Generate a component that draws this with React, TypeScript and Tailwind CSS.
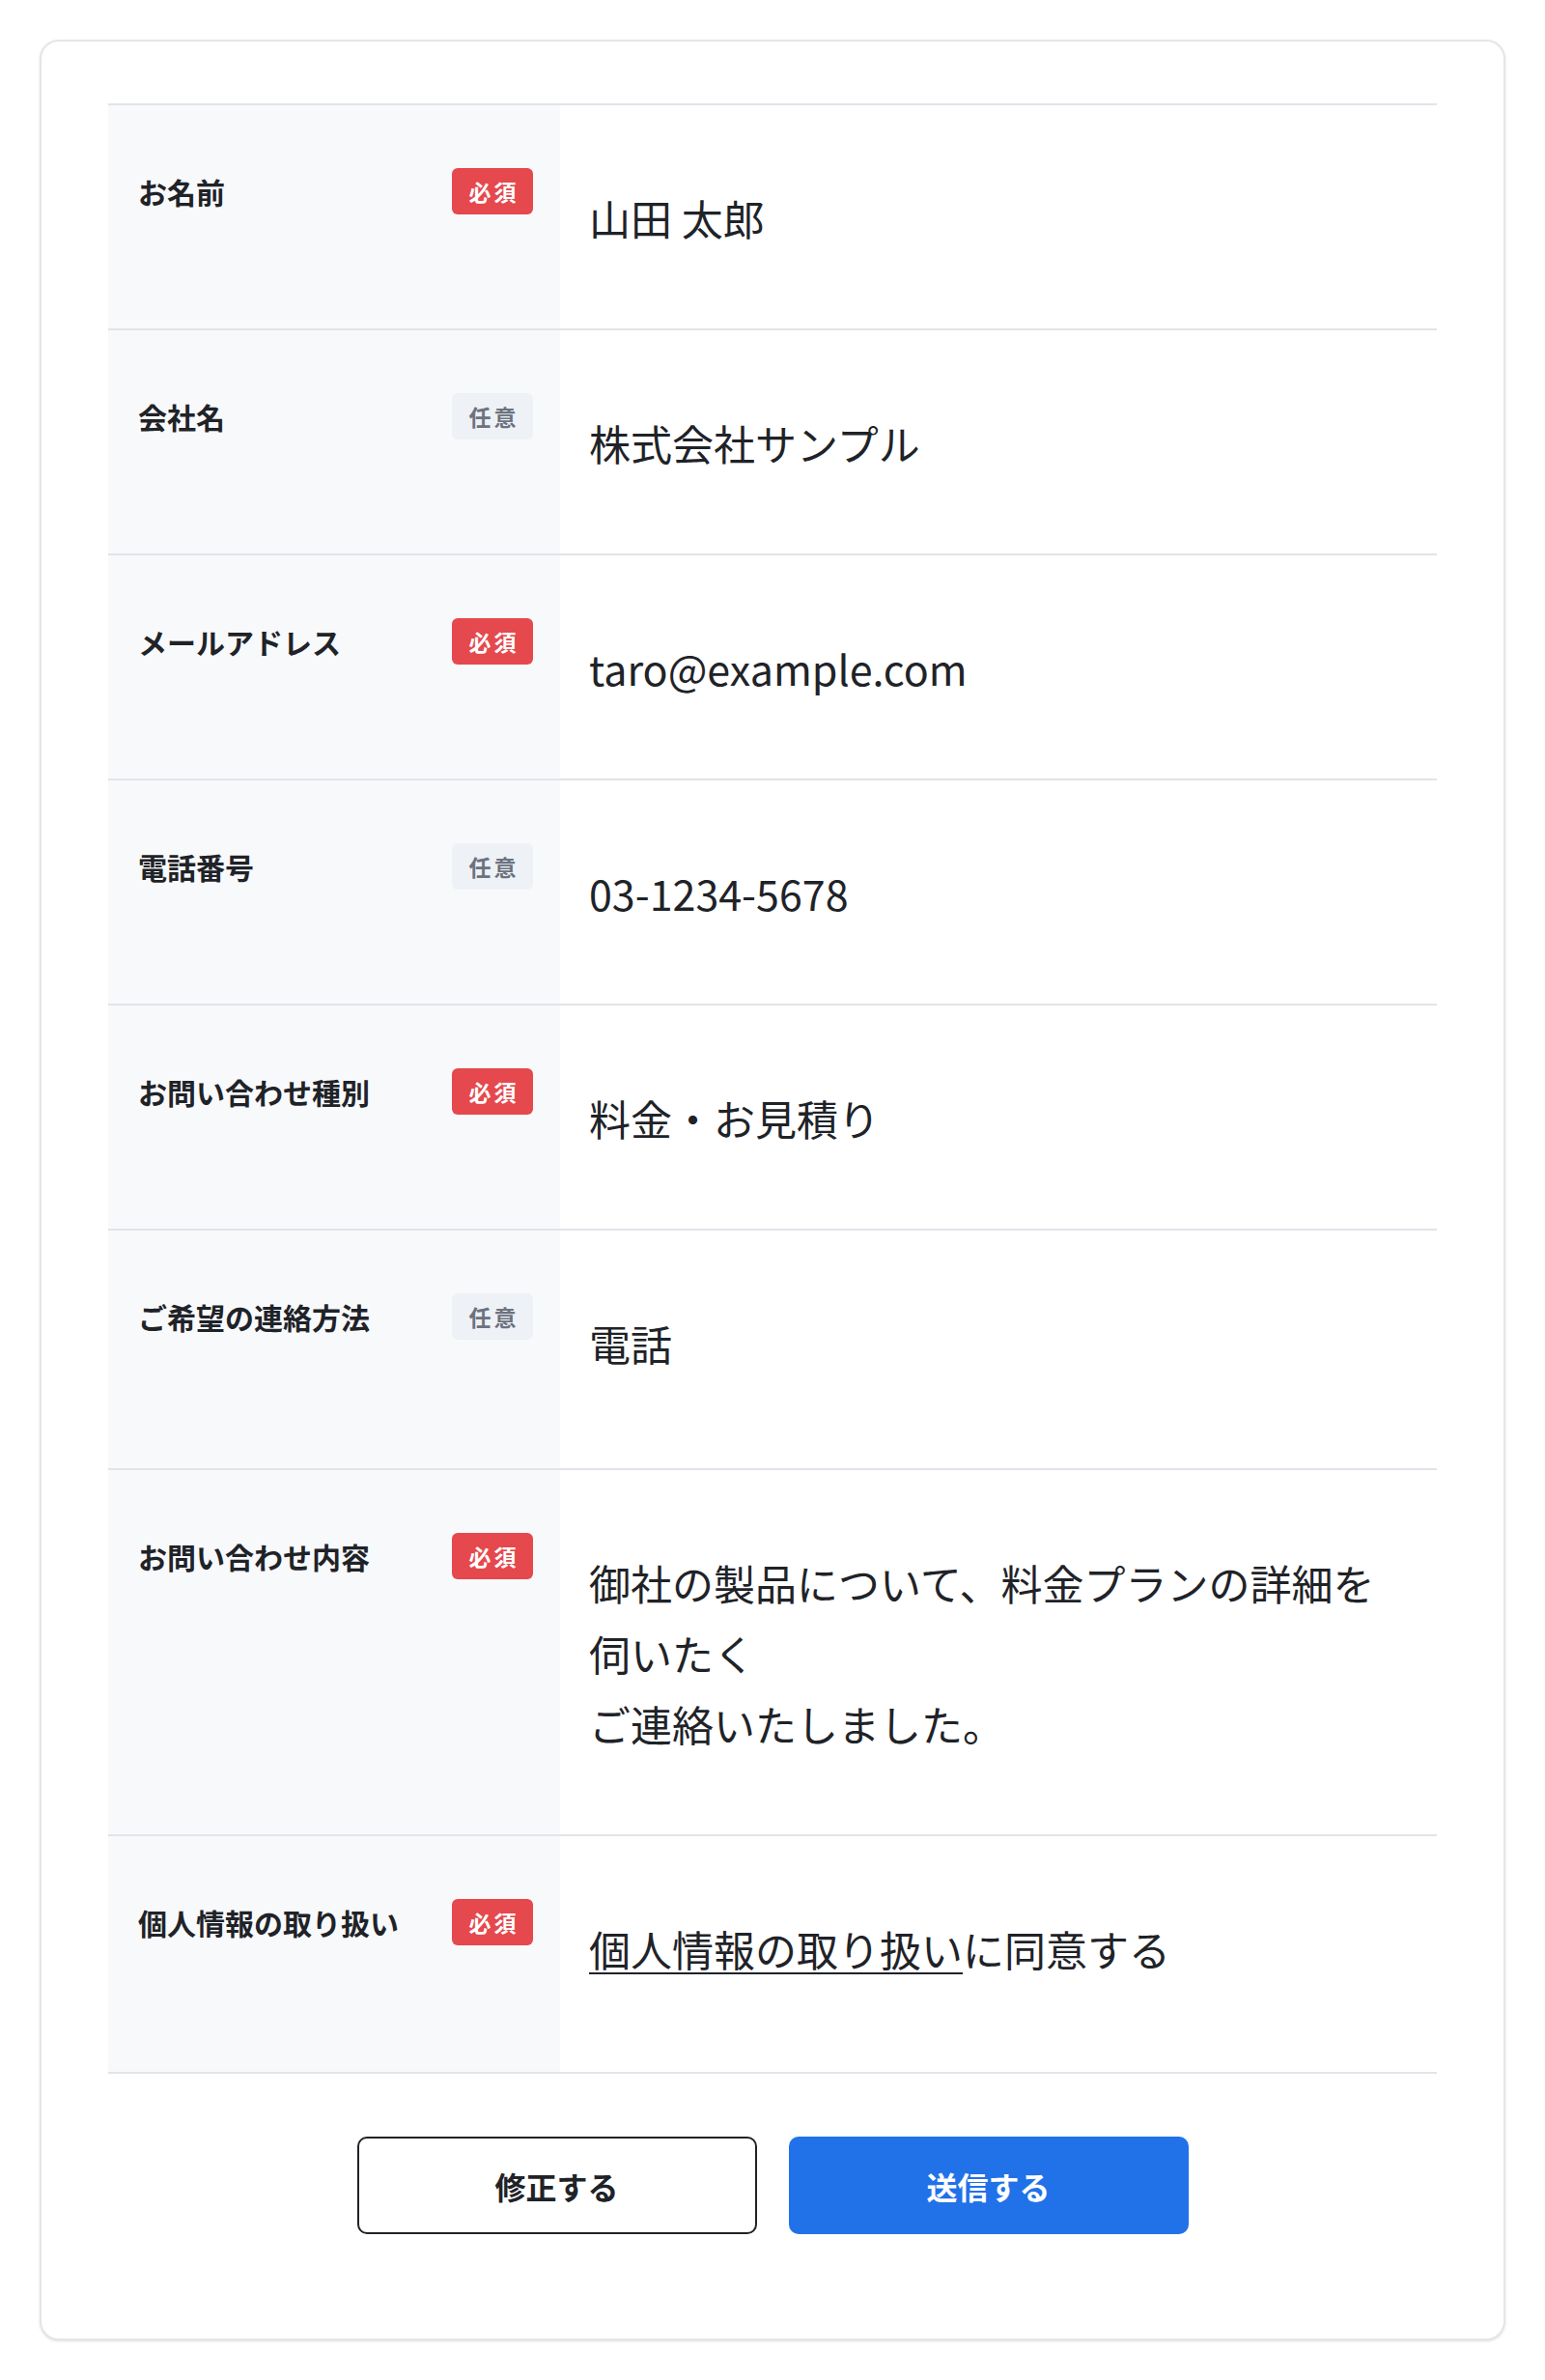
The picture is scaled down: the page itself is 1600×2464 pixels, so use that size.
import React from "react";

type Row = {
  label: string;
  required: boolean;
  value: React.ReactNode;
  minH?: string;
};

const rows: Row[] = [
  { label: "お名前", required: true, value: "山田 太郎" },
  { label: "会社名", required: false, value: "株式会社サンプル" },
  { label: "メールアドレス", required: true, value: "taro@example.com" },
  { label: "電話番号", required: false, value: "03-1234-5678" },
  { label: "お問い合わせ種別", required: true, value: "料金・お見積り" },
  { label: "ご希望の連絡方法", required: false, value: "電話", minH: "min-h-[248px]" },
  {
    label: "お問い合わせ内容",
    required: true,
    value: (
      <>
        御社の製品について、料金プランの詳細を
        <br />
        伺いたく
        <br />
        ご連絡いたしました。
      </>
    ),
  },
  {
    label: "個人情報の取り扱い",
    required: true,
    value: (
      <>
        <span className="underline decoration-2 underline-offset-[6px]">個人情報の取り扱い</span>
        に同意する
      </>
    ),
    minH: "min-h-[246px]",
  },
];

function Badge({ required }: { required: boolean }) {
  return required ? (
    <span className="flex h-[48px] w-[84px] shrink-0 items-center justify-center rounded-[6px] bg-[#e5484d] pl-[3px] text-[23px] font-bold tracking-[3px] text-white">
      必須
    </span>
  ) : (
    <span className="flex h-[48px] w-[84px] shrink-0 items-center justify-center rounded-[6px] bg-[#eef1f5] pl-[3px] text-[23px] font-bold tracking-[3px] text-[#6b7280]">
      任意
    </span>
  );
}

export default function App() {
  return (
    <div
      className="min-h-screen bg-white pt-[41px] pb-[41px] text-[#1f2328]"
      style={{ fontFamily: '"Noto Sans CJK JP", "Noto Sans", sans-serif' }}
    >
      <div className="mx-auto w-[1518px] rounded-[20px] border-2 border-[#e3e6ea] bg-white px-[69px] pt-[64px] pb-[108px] shadow-sm">
        <div className="border-t-2 border-[#e1e4e9]">
          {rows.map((row) => (
            <div key={row.label} className={`flex border-b-2 border-[#e1e4e9] ${row.minH ?? ""}`}>
              <div className="flex w-[468px] shrink-0 items-start bg-[#f8f9fb] pt-[65px] pr-[28px] pl-[31px]">
                <div className="flex w-full items-center justify-between">
                  <span className="text-[30px] font-bold leading-[48px]">{row.label}</span>
                  <Badge required={row.required} />
                </div>
              </div>
              <div className="flex-1 pt-[80px] pb-[78px] pl-[30px] text-[43px] leading-[73px]">
                {row.value}
              </div>
            </div>
          ))}
        </div>

        <div className="mt-[65px] flex justify-center gap-[33px]">
          <button className="h-[101px] w-[414px] rounded-[10px] border-2 border-[#1f2328] bg-white text-[32px] font-bold text-[#1f2328]">
            修正する
          </button>
          <button className="h-[101px] w-[414px] rounded-[10px] bg-[#2171e9] text-[32px] font-bold text-white">
            送信する
          </button>
        </div>
      </div>
    </div>
  );
}
